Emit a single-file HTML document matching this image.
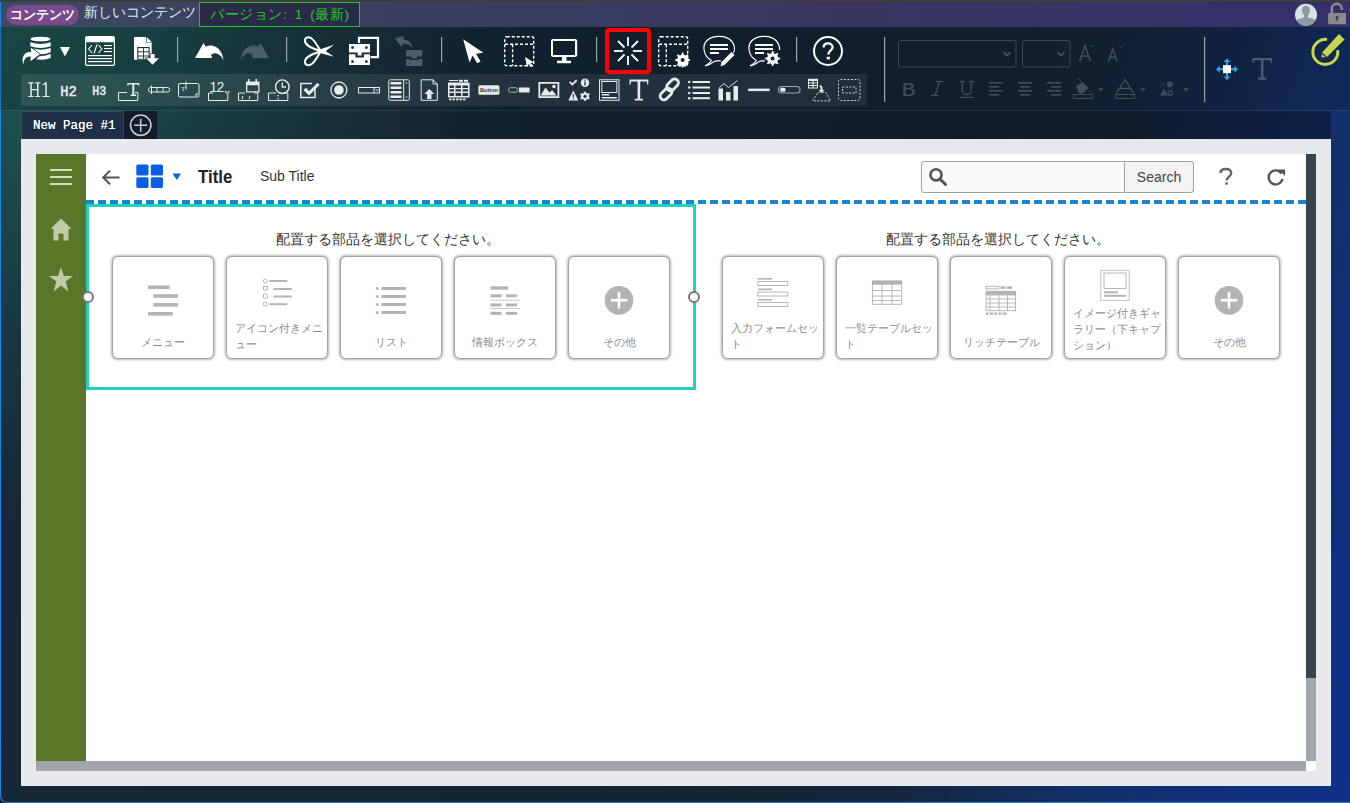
<!DOCTYPE html>
<html><head><meta charset="utf-8">
<style>
*{margin:0;padding:0;box-sizing:border-box}
html,body{width:1350px;height:803px;overflow:hidden;background:#1e1e1e}
body{position:relative;font-family:"Liberation Sans",sans-serif}
.abs{position:absolute}
#bg{position:absolute;left:0;top:0;width:1350px;height:803px;
 background:radial-gradient(ellipse 520px 520px at 0 0,rgba(30,84,80,1) 0%,rgba(30,84,80,0.8) 30%,rgba(30,84,80,0.35) 65%,rgba(30,84,80,0) 100%),linear-gradient(110deg,#16283a 0%,#152535 45%,#142433 62%,#14263e 72%,#13306a 84%,#10308a 100%);
 border-left:1px solid #1a86e6;border-bottom:1.5px solid #1a86e6;border-bottom-left-radius:7px}
#tbov{left:0;top:27px;width:1350px;height:83px;background:rgba(0,0,0,0.15)}
#tabov{left:21px;top:111px;width:1310px;height:28px;background:linear-gradient(90deg,rgba(0,0,0,0.05),rgba(0,0,0,0.15) 40%,rgba(0,0,0,0.2) 70%,rgba(0,0,0,0.32))}
#topstrip{left:0;top:0;width:1350px;height:2px;background:#3d3d3d}
#hdr{left:1px;top:2px;width:1349px;height:25px;background:linear-gradient(90deg,#3b4a60 0%,#3a3f60 30%,#38365f 60%,#33306c 100%)}
.pill{left:6px;top:5px;width:73px;height:20px;border-radius:10px;background:#7a4a8c;color:#fff;font-size:12.5px;font-weight:bold;line-height:20px;text-align:center}
.hname{left:84px;top:3px;color:#e8e8f0;font-size:13.6px;line-height:20px}
.ver{left:199px;top:2px;width:161px;height:25px;border:1px solid #1fc81f;background:#2a2a48;color:#22cc22;font-size:13.5px;line-height:23px;padding-left:10px;white-space:nowrap;letter-spacing:0.6px;word-spacing:3px}
.sep{position:absolute;width:1px;background:#8a96a0}
#row2{left:21px;top:74px;width:846px;height:32px;border-radius:3px;background:linear-gradient(90deg,rgba(255,255,255,0.09),rgba(255,255,255,0.07))}
.ic{position:absolute}
#tabline{left:1px;top:110px;width:1349px;height:1px;background:rgba(255,255,255,0.06)}
#tab1{left:21px;top:111px;width:103px;height:28px;background:#1e2f47;border:1px solid #33445a;border-bottom:none;color:#fff;font-family:"Liberation Mono",monospace;font-size:12.5px;line-height:28px;padding-left:11px;font-weight:normal;text-shadow:0 0 0.5px #fff}
#tab2{left:124px;top:111px;width:33px;height:28px;background:#131d2a}
#content{left:21px;top:139px;width:1310px;height:647px;background:#e8e9ec}
#page{left:36px;top:154px;width:1270px;height:607px;background:#fff}
#side{left:36px;top:154px;width:50px;height:607px;background:#5a7628}
#vscroll{left:1306px;top:154px;width:10px;height:607px;background:#a1a6ad}
#vthumb{left:1306px;top:154px;width:10px;height:524px;background:#35444f}
#hscroll{left:36px;top:761px;width:1270px;height:10px;background:#a1a6ad}
#corner{left:1306px;top:761px;width:10px;height:10px;background:#fff}
.dash{left:86px;top:200px;width:1220px;height:4px;background:repeating-linear-gradient(90deg,#1586d8 0 8px,transparent 8px 12px)}
#sel{left:86px;top:204px;width:610px;height:186px;border:3px solid #20d0c0}
.handle{position:absolute;width:12px;height:12px;border-radius:50%;border:2px solid #777;background:#fff}
.instr{position:absolute;top:231px;font-size:13.6px;color:#333;width:400px;text-align:center;line-height:18px}
.card{position:absolute;top:256px;width:102px;height:103px;border-radius:6px;background:#fff;border:1.5px solid #a2a2a2;box-shadow:0 0 2.5px 0.5px rgba(0,0,0,0.3)}
.card .lbl{position:absolute;left:0;right:0;color:#8c8c8c;font-size:10.6px;line-height:16px}
.title{left:198px;top:166px;font-size:19px;font-weight:bold;color:#222;transform:scaleX(0.885);transform-origin:0 0}
.subtitle{left:260px;top:168px;font-size:14px;color:#333}
#search{left:921px;top:161px;width:273px;height:32px;border:1px solid #a0a0a0;border-radius:3px;background:#fafafa}
#sbtn{left:1124px;top:161px;width:70px;height:32px;border:1px solid #a0a0a0;border-radius:0 3px 3px 0;background:#f3f3f3;color:#444;font-size:14px;line-height:30px;text-align:center}
</style></head><body>
<div id="bg"></div>
<div class="abs" id="topstrip"></div>
<div class="abs" id="tbov"></div>
<div class="abs" id="tabov"></div>
<div class="abs" id="hdr"></div>
<div class="abs pill">コンテンツ</div>
<div class="abs hname">新しいコンテンツ</div>
<div class="abs ver">バージョン: 1 (最新)</div>

<div class="abs" id="row2"></div>
<svg class="abs" style="left:0;top:0" width="1350" height="140" viewBox="0 0 1350 140">
<g fill="#fff" stroke="none">
 <!-- DB icon -->
 <ellipse cx="40.5" cy="39" rx="10" ry="2.3"/>
 <path d="M30.3 42.2 Q40.5 45.8 50.7 42.2 V46.2 Q40.5 49.8 30.3 46.2 Z"/>
 <path d="M33 48.5 Q40.5 51 50.7 48 V52.3 Q44 55 39 54 Z"/>
 <path d="M39.5 56.2 Q46 56 50.7 54 V58 Q44 60.5 36 59.2 Z"/>
 <path d="M23.5 64.8 C20.5 57 25 51 31.2 52.2 L30.8 47.5 L39.8 54.3 L30.5 61.2 L30.6 56.5 C26.5 55.8 23.5 59 23.5 64.8 Z" stroke="#1a4448" stroke-width="1.3" paint-order="stroke"/>
 <path d="M60 47 L70 47 L65 56.6 Z"/>
 <!-- html icon -->
 <path fill-rule="evenodd" d="M87 36 H113 Q115 36 115 38 V64 Q115 66 113 66 H87 Q85 66 85 64 V38 Q85 36 87 36 Z M86.2 42.2 V63.8 Q86.2 64.8 87.2 64.8 H112.8 Q113.8 64.8 113.8 63.8 V42.2 Z"/>
 <rect x="104" y="45" width="8" height="1.1"/><rect x="104" y="48" width="8" height="1.1"/><rect x="104" y="51" width="8" height="1.1"/>
 <path d="M92 45 L88.6 49 L92 53 M97 44.5 L94 53.5 M98.5 45 L101.9 49 L98.5 53" fill="none" stroke="#fff" stroke-width="1.1"/>
 <rect x="88" y="55" width="24" height="1.2"/><rect x="88" y="58" width="24" height="1.2"/><rect x="88" y="61" width="24" height="1.2"/>
 <!-- sheet icon -->
 <path d="M134 37 H146 V42.5 H151.7 V56 L148.5 56 V59.7 H134 Z"/>
 <path d="M146.7 37 L151.7 42 H146.7 Z"/>
 <rect x="137.2" y="47" width="12.5" height="12.7" fill="#18393f"/>
 <rect x="138.3" y="48.1" width="4.8" height="3.2"/><rect x="144" y="48.1" width="4.6" height="3.2"/>
 <rect x="138.3" y="52.3" width="4.8" height="3.2"/><rect x="144" y="52.3" width="4.6" height="3.2"/>
 <rect x="138.3" y="56.5" width="4.8" height="2.2"/><rect x="144" y="56.5" width="4.6" height="2.2"/>
 <path d="M150.5 54 H154.6 V58.2 H159 L152.6 64.8 L146.2 58.2 H150.5 Z" stroke="#18393f" stroke-width="1.2" paint-order="stroke"/>
 <!-- undo -->
 <path d="M195 58 L203.5 43 L205.7 46.6 C213 43.5 222 47.5 223.5 60.5 C221 54.5 215.5 51 211 55 L212.2 58 Z"/>
 <!-- scissors -->
 <g fill="none" stroke="#fff" stroke-width="2">
  <path d="M320.5 51 C314 49 306 46.5 305 41.5 C304.5 37.5 308 36.5 311 38 C314.5 40 317 45 320.5 51"/>
  <path d="M320.5 51.5 C314 53.5 306 56 305 61 C304.5 65 308 66 311 64.5 C314.5 62.5 317 57.5 320.5 51.5"/>
 </g>
 <path d="M318 50 L334 44.8 L324 52.5 Z"/>
 <path d="M318 52.5 L334 56.8 L324 50 Z"/>
 <!-- copy -->
 <path d="M357.9 43 V36.8 H379.1 V58.2 H370.5 V56 H376.9 V39 H360.1 V43 Z"/>
 <path d="M349 44 H370 V52.6 H361.7 V55.5 H357.7 V52.6 H349 Z"/>
 <path d="M349 54.3 H355.4 V57.5 H363.9 V54.3 H370 V65.1 H349 Z"/>
 <circle cx="352.6" cy="47.6" r="1.4" fill="#17283a"/><circle cx="366.4" cy="47.6" r="1.4" fill="#17283a"/>
 <circle cx="352.6" cy="61.6" r="1.4" fill="#17283a"/><circle cx="366.4" cy="61.6" r="1.4" fill="#17283a"/>
 <!-- pointer -->
 <path d="M463.2 39.2 L483.4 52.7 L476 53.8 L480.6 61.6 L477.2 63.3 L472.6 55.4 L469.5 62.6 Z"/>
 <!-- monitor -->
 <path fill-rule="evenodd" d="M553 38.9 H575 Q577.2 38.9 577.2 41 V55 Q577.2 57 575 57 H553 Q551 57 551 55 V41 Q551 38.9 553 38.9 Z M553 41 V55 H575 V41 Z"/>
 <rect x="562" y="57" width="4.5" height="4"/><rect x="557" y="60.7" width="14" height="2.5"/>
 <!-- spinner -->
 <g stroke="#fff" stroke-width="1.8" stroke-linecap="butt">
  <line x1="628" y1="37" x2="628" y2="46"/><line x1="628" y1="56" x2="628" y2="65"/>
  <line x1="614" y1="51" x2="623" y2="51"/><line x1="633" y1="51" x2="642" y2="51"/>
  <line x1="618" y1="41" x2="624.5" y2="47.5"/><line x1="631.5" y1="54.5" x2="638" y2="61"/>
  <line x1="638" y1="41" x2="631.5" y2="47.5"/><line x1="624.5" y1="54.5" x2="618" y2="61"/>
 </g>
 <!-- chats lines -->
 <rect x="710" y="44" width="18" height="2"/><rect x="710" y="48" width="18" height="2"/><rect x="710" y="52" width="9" height="2"/>
 <rect x="755" y="44" width="18" height="2"/><rect x="755" y="48" width="18" height="2"/><rect x="755" y="52" width="9" height="2"/>
 <!-- pencil on chat1 -->
 <path d="M731.5 52 L734.5 55 L724.5 65 L720.5 66.2 L721.6 62 Z"/>
 <!-- help ? -->
 <path d="M823.6 47.6 C823.6 44.9 825.5 43.4 828.1 43.4 C830.8 43.4 832.6 45.1 832.6 47.3 C832.6 50.6 828.3 50.9 828.3 54.6" fill="none" stroke="#fff" stroke-width="2.3"/><rect x="826.7" y="56.8" width="3.2" height="2.6"/>
</g>
<!-- dashed rects -->
<g fill="none" stroke="#fff" stroke-width="1.4" stroke-dasharray="3 2">
 <rect x="504.7" y="36.7" width="29" height="29" rx="2"/>
 <path d="M505 44.3 H533.5 M512.6 44.3 V65.5"/>
 <rect x="658.7" y="36.7" width="29" height="29" rx="2"/>
 <path d="M659 44.3 H687.5 M666.3 44.3 V65.5"/>
</g>
<path d="M525 57 L534 62.5 L530.5 63 L533.5 66 L532 67 L529 64 L527 67 Z" fill="#fff"/>
<!-- gears -->
<g id="gear" fill="#fff">
 <path d="M682 52.5 l1.3 0 l0.6 2.2 l1.6 0.7 l2 -1.1 l0.9 0.9 l-1.1 2 l0.7 1.6 l2.2 0.6 l0 1.3 l-2.2 0.6 l-0.7 1.6 l1.1 2 l-0.9 0.9 l-2 -1.1 l-1.6 0.7 l-0.6 2.2 l-1.3 0 l-0.6 -2.2 l-1.6 -0.7 l-2 1.1 l-0.9 -0.9 l1.1 -2 l-0.7 -1.6 l-2.2 -0.6 l0 -1.3 l2.2 -0.6 l0.7 -1.6 l-1.1 -2 l0.9 -0.9 l2 1.1 l1.6 -0.7 Z"/>
</g>
<circle cx="682.6" cy="60.1" r="2" fill="#14222f"/>
<g transform="translate(90,-1.5)"><use href="#gear"/></g>
<circle cx="772.6" cy="58.6" r="2" fill="#14222f"/>
<!-- chat bubbles outlines -->
<g fill="none" stroke="#fff" stroke-width="1.2">
 <path d="M711.5 60.5 C703 56 702 45 707 40.5 C713 35 726 35 731.5 41 C735 45 735 50 733.5 53 M721 61 C718 61 716 60.5 714 61.5 C712 63 709 65.5 705 66 C708.5 64 710.5 62 711.5 60.5"/>
 <path d="M756.5 60.5 C748 56 747 45 752 40.5 C758 35 771 35 776.5 41 C779 44 780 47 779.5 50 M765 61 C763 61 761 60.5 759 61.5 C757 63 754 65.5 750 66 C753.5 64 755.5 62 756.5 60.5"/>
 <circle cx="828" cy="51" r="14" stroke-width="2"/>
</g>
<!-- separators -->
<g fill="#98a4ac">
 <rect x="177" y="37" width="1.2" height="25"/>
 <rect x="286" y="37" width="1.2" height="25"/>
 <rect x="441" y="37" width="1.2" height="25"/>
 <rect x="596" y="37" width="1.2" height="25"/>
 <rect x="796" y="37" width="1.2" height="25"/>
 <rect x="884" y="37" width="1.2" height="65"/>
 <rect x="1204" y="37" width="1.2" height="65"/>
</g>
<!-- dim redo / paste -->
<g fill="#4a6068">
 <path d="M269 58 L260.5 43 L258.3 46.6 C251 43.5 242 47.5 240.5 60.5 C243 54.5 248.5 51 253 55 L251.8 58 Z"/>
 <path d="M395 38.5 L404 36 L403 39.5 C409 40 412 43 412.5 48 C410 44.5 406 43.5 402.5 43.8 L401.5 47 Z"/>
 <path fill-rule="evenodd" d="M406 50 H422.3 V56.5 H417 V58.5 H411.3 V56.5 H406 Z M406 59 H409.5 V60 H418.8 V59 H422.3 V66 H406 Z"/>
</g>
<!-- red box -->
<rect x="607" y="30" width="42" height="42" rx="2" fill="none" stroke="#ff0000" stroke-width="4"/>
</svg>

<svg class="abs" style="left:0;top:70px" width="880" height="40" viewBox="0 70 880 40">
<g fill="#e6ecec">
 <path d="M28.3 82.3 H33.6 V83.4 H31.8 V89 H37 V83.4 H35.2 V82.3 H40.3 V83.4 H38.5 V95.9 H40.3 V97 H35.2 V95.9 H37 V90.3 H31.8 V95.9 H33.6 V97 H28.3 V95.9 H30.3 V83.4 H28.3 Z"/>
 <path d="M45.3 82.3 H46.8 V95.9 H49.6 V97 H42.5 V95.9 H45.3 V84.3 L42.6 85.6 V84.4 Z"/>
 <text x="60.2" y="96.3" font-family="Liberation Mono" font-size="15.5" textLength="16.5" lengthAdjust="spacingAndGlyphs" stroke="#e6ecec" stroke-width="0.6">H2</text>
 <text x="92.3" y="95.3" font-family="Liberation Mono" font-size="13.5" textLength="14" lengthAdjust="spacingAndGlyphs" stroke="#e6ecec" stroke-width="0.6">H3</text>
</g>
<g fill="none" stroke="#e6ecec" stroke-width="1">
 <!-- text input -->
 <path d="M127 92.5 H118.5 V100.5 H137.8 V92.5 H135"/>
 <!-- small input -->
 <rect x="148.5" y="87.5" width="21" height="4.5" rx="2"/>
 <path d="M157 87.5 V92 M163 87.5 V92"/>
 <!-- textarea -->
 <rect x="178.5" y="83.5" width="20.5" height="13.5" rx="1.5"/>
 <!-- number -->
 <path d="M213 93 H208.5 V100.5 H227.8 V93 H226"/>
 <!-- calendar box -->
 <path d="M245 93 H238.5 V100.5 H257.8 V93 H254"/>
 <path d="M242 99 L243 96 M249 99 L250 96"/>
 <!-- clock box -->
 <path d="M276 93 H268.5 V100.5 H287.8 V93 H284"/>
 <circle cx="282.3" cy="86.7" r="6.8" stroke-width="1.4"/>
 <path d="M282.3 82.5 V87 H286" stroke-width="1.3"/>
 <!-- checkbox -->
 <path d="M315 87 V97.5 H300.8 V83.5 H312" stroke-width="1.5"/>
 <!-- radio -->
 <circle cx="338.9" cy="90" r="8" stroke-width="1.3"/>
 <!-- select -->
 <rect x="358.5" y="87.5" width="21" height="5.5"/>
 <path d="M374 87.5 V93"/>
 <!-- listbox -->
 <rect x="388.8" y="79.8" width="20.5" height="20.5" rx="1.5"/>
 <path d="M403.7 80 V100"/>
 <!-- file -->
 <path d="M433 79.8 H421.2 V100.3 H437.3 V84 Z M433 79.8 V84 H437.3"/>
 <!-- frame -->
 <rect x="599.5" y="79.8" width="19.5" height="20.5"/>
 <rect x="601.8" y="81.5" width="15" height="11"/>
 <!-- toggle -->
 <rect x="778.5" y="86.5" width="21.5" height="6.5" rx="3.25" stroke="#9aa4ac" stroke-width="1.2"/>
 <!-- slider left -->
 <rect x="508.5" y="87.7" width="9" height="4.5" rx="2" stroke="#aab4b8"/>
</g>
<g fill="#e6ecec">
 <!-- T on input -->
 <path d="M127.3 83 H139.3 V85.8 H138.2 V84.5 H134.3 V94.5 H136 V96 H130.6 V94.5 H132.3 V84.5 H128.4 V85.8 H127.3 Z"/>
 <!-- small input handle -->
 <rect x="151" y="85.5" width="1" height="8.5"/>
 <!-- textarea T -->
 <text x="181" y="90.5" font-family="Liberation Serif" font-size="7">T</text>
 <rect x="185.5" y="81.5" width="1" height="8"/>
 <path d="M197.5 95.5 L197.5 92.5 L194.5 95.5 Z"/>
 <!-- 12.. -->
 <text x="209.5" y="92.3" font-family="Liberation Sans" font-size="14" letter-spacing="-0.8">12</text>
 <rect x="225" y="91" width="1.5" height="1.5"/><rect x="228" y="91" width="1.5" height="1.5"/>
 <!-- calendar -->
 <path fill-rule="evenodd" d="M246 81.5 H259.5 V92.5 H246 Z M247.3 85.2 V91.2 H258.2 V85.2 Z"/>
 <rect x="248" y="79" width="1.5" height="3.5"/><rect x="255.5" y="79" width="1.5" height="3.5"/>
 <!-- clock dots -->
 <rect x="277.5" y="95" width="1.3" height="1.3"/><rect x="277.5" y="98" width="1.3" height="1.3"/>
 <!-- check mark -->
 <path d="M303.5 90 L306 87.7 L309 91.2 L317.5 82.8 L319.5 85 L309 95.5 Z"/>
 <!-- radio dot -->
 <circle cx="338.9" cy="90" r="4.8"/>
 <!-- select caret -->
 <path d="M375.5 89 L377 91 L378.5 89" fill="none" stroke="#e6ecec" stroke-width="0.8"/>
 <!-- listbox bars -->
 <rect x="390.5" y="82" width="11" height="2.5"/><rect x="390.5" y="86.5" width="11" height="2.5"/>
 <rect x="390.5" y="91" width="11" height="2.5"/><rect x="390.5" y="95.5" width="11" height="2.5"/>
 <path d="M405.5 83.5 L406.5 82 L407.5 83.5 Z M405.5 96.5 L406.5 98 L407.5 96.5 Z"/>
 <!-- upload arrow -->
 <path d="M429.3 89 L434.3 94 H431.5 V99 H427.1 V94 H424.3 Z"/>
 <!-- table -->
 <path fill-rule="evenodd" d="M448 82.5 H469.6 V97.5 H448 Z M449.5 85.5 V88 H454 V85.5 Z M455.5 85.5 V88 H461 V85.5 Z M462.5 85.5 V88 H468 V85.5 Z M449.5 89.3 V91.6 H454 V89.3 Z M455.5 89.3 V91.6 H461 V89.3 Z M462.5 89.3 V91.6 H468 V89.3 Z M449.5 93 V96 H454 V93 Z M455.5 93 V96 H461 V93 Z M462.5 93 V96 H468 V93 Z"/>
 <rect x="449" y="80" width="9" height="1"/><rect x="459" y="79.8" width="4" height="2"/><rect x="464" y="79.8" width="4" height="2"/>
 <rect x="449" y="98.5" width="2.5" height="1.8"/><rect x="452.5" y="98.5" width="2.5" height="1.8"/><rect x="456" y="98.5" width="2.5" height="1.8"/><rect x="459.5" y="98.5" width="2.5" height="1.8"/><rect x="463" y="98.5" width="2.5" height="1.8"/>
 <!-- button -->
 <rect x="478.4" y="85.3" width="21" height="9.4" rx="1.5"/>
 <text x="489" y="92.3" font-family="Liberation Sans" font-size="5.6" text-anchor="middle" fill="#2a3a48" font-weight="bold">Button</text>
 <!-- slider right -->
 <rect x="519" y="87.5" width="10.6" height="5"/>
 <!-- image -->
 <path fill-rule="evenodd" d="M538.4 82 H559.3 V98 H538.4 Z M540.2 83.8 V96.2 H557.5 V83.8 Z"/>
 <path d="M540.5 95.5 L545.5 87.5 L549.5 92.5 L552 90 L556.5 95.5 Z"/>
 <circle cx="554" cy="86.5" r="1.8"/>
 <!-- icons group -->
 <path d="M569 82.5 L570.3 81.2 L572.3 83.2 L576 79.6 L577.3 80.9 L572.3 85.8 Z"/>
 <circle cx="585" cy="82.8" r="4.2"/>
 <rect x="584.3" y="81.5" width="1.4" height="4" fill="#2a3848"/><rect x="584.3" y="79.6" width="1.4" height="1.2" fill="#2a3848"/>
 <path d="M573.3 90.5 L578.3 100.6 H568.3 Z"/>
 <rect x="572.7" y="94" width="1.2" height="3.5" fill="#2a3848"/><rect x="572.7" y="98.3" width="1.2" height="1.1" fill="#2a3848"/>
 <g transform="translate(585 96.3)"><path d="M-1 -4.5 H1 L1.4 -3.2 L2.6 -2.6 L3.8 -3.3 L4.9 -1.9 L4 -1 V1 L4.9 1.9 L3.8 3.3 L2.6 2.6 L1.4 3.2 L1 4.5 H-1 L-1.4 3.2 L-2.6 2.6 L-3.8 3.3 L-4.9 1.9 L-4 1 V-1 L-4.9 -1.9 L-3.8 -3.3 L-2.6 -2.6 L-1.4 -3.2 Z"/><circle r="1.6" fill="#2a3848"/></g>
 <!-- frame bars -->
 <rect x="601.8" y="94" width="7.5" height="1.5"/><rect x="601.8" y="97" width="15" height="1.5"/>
 <!-- T big -->
 <path d="M629.5 79.5 H648.3 V84.5 H647 V81.5 H640.2 V98.8 H643 V100.5 H634.8 V98.8 H637.6 V81.5 H630.8 V84.5 H629.5 Z"/>
 <!-- list -->
 <circle cx="689.2" cy="82" r="1.2"/><circle cx="689.2" cy="87.5" r="1.2"/><circle cx="689.2" cy="93" r="1.2"/><circle cx="689.2" cy="98.2" r="1.2"/>
 <rect x="692.5" y="81" width="17.5" height="2"/><rect x="692.5" y="86.5" width="17.5" height="2"/><rect x="692.5" y="92" width="17.5" height="2"/><rect x="692.5" y="97.2" width="17.5" height="2"/>
 <!-- chart -->
 <rect x="718.5" y="88.5" width="4.5" height="12"/><rect x="726" y="92" width="4.5" height="8.5"/><rect x="733.5" y="86" width="4.5" height="14.5"/>
 <!-- line -->
 <rect x="748.2" y="88.6" width="21.5" height="2.5"/>
 <!-- toggle knob -->
 <rect x="780.3" y="87.8" width="5.2" height="4" rx="1.5"/>
 <!-- import table -->
 <path fill-rule="evenodd" d="M808 78.8 H818 V88.5 H808 Z M809 81 V82.5 H812.5 V81 Z M813.5 81 V82.5 H817 V81 Z M809 83.5 V85 H812.5 V83.5 Z M813.5 83.5 V85 H817 V83.5 Z M809 86 V87.5 H812.5 V86 Z M813.5 86 V87.5 H817 V86 Z"/>
 <path d="M819.5 85 C822 85.5 823 87 822.5 90 L824.5 89.5 L821.5 93 L818.5 89.8 L820.5 90 C821 88 820.5 86.5 819.5 86.5 Z"/>
</g>
<g fill="none" stroke="#e6ecec" stroke-width="1.4">
 <path d="M719 88.2 L724 83.5 L728.5 87.5 L737.5 80.5" stroke-width="0.9"/>
 <g transform="rotate(-45 669.2 89.5)" stroke-width="2.8"><rect x="657" y="86.6" width="13.6" height="7.6" rx="3.8"/><rect x="668" y="84.8" width="13.6" height="7.6" rx="3.8" stroke="#2a3746" stroke-width="4.6" fill="none" stroke-dasharray="0 3.5 10 100"/><rect x="668" y="84.8" width="13.6" height="7.6" rx="3.8"/></g>
</g>
<g fill="none" stroke="#c8d0d4" stroke-width="1" stroke-dasharray="2 1.5">
 <path d="M812.5 100.8 L818 92.5 C820 92 824 92 826 92.5 L830.5 100.8 Z"/>
 <rect x="838.5" y="79.5" width="21.5" height="21" rx="2"/>
 <rect x="842.5" y="87" width="13.5" height="6"/>
</g>
</svg>

<svg class="abs" style="left:880px;top:0" width="470" height="110" viewBox="880 0 470 110">
<!-- avatar -->
<circle cx="1306" cy="14.8" r="11" fill="#d9e1e8"/>
<clipPath id="avc"><circle cx="1306" cy="14.8" r="11"/></clipPath><g clip-path="url(#avc)" fill="#8c9aa2"><path d="M1302 10 C1302 7.2 1303.8 5.8 1306 5.8 C1308.2 5.8 1310 7.2 1310 10 C1310 12.5 1309 14.2 1308 15.2 L1308 17.5 C1312 18.3 1316 19.5 1318 22 V27 H1294 V22 C1296 19.5 1300 18.3 1304 17.5 L1304 15.2 C1303 14.2 1302 12.5 1302 10 Z"/></g>
<!-- lock -->
<rect x="1328.1" y="13" width="17.9" height="11.2" rx="1" fill="#8a8a8a"/>
<path d="M1331.8 13.5 V8.5 C1331.8 5.5 1334 3.8 1336.8 3.8 C1339.6 3.8 1341.8 5.5 1341.8 8.5 V10" fill="none" stroke="#8a8a8a" stroke-width="2.4"/>
<circle cx="1337" cy="17.5" r="1.4" fill="#36306a"/><rect x="1336.3" y="17.5" width="1.4" height="3.5" fill="#36306a"/>
<!-- selects -->
<rect x="898.5" y="40.5" width="117.5" height="26.5" rx="2" fill="none" stroke="#3c4b58" stroke-width="1"/>
<rect x="1022.5" y="40.5" width="47.5" height="26.5" rx="2" fill="none" stroke="#3c4b58" stroke-width="1"/>
<g fill="none" stroke="#4a5864" stroke-width="1.6">
 <path d="M1003.5 52 L1007 55.5 L1010.5 52"/>
 <path d="M1057.5 52 L1061 55.5 L1064.5 52"/>
</g>
<g fill="none" stroke="#44525e" stroke-width="1.3">
 <path d="M1079.5 61.5 L1085 45.5 L1090.5 61.5 M1081.5 56 H1088.5"/>
 <path d="M1108.5 61.5 L1112.8 49 L1117 61.5 M1110 57 H1115.5"/>
</g>
<g fill="none" stroke="#2a5a78" stroke-width="0.9">
 <path d="M1090.5 47 L1092.5 45 L1094.5 47"/>
 <path d="M1119 45.5 L1121 47.5 L1123 45.5"/>
</g>
<!-- B I U -->
<g fill="#3f4e5a">
 <text x="901.5" y="96" font-family="Liberation Mono" font-size="20" textLength="14" lengthAdjust="spacingAndGlyphs">B</text>
 <path d="M935.5 81.5 H943.5 M931 95.5 H939 M939.5 81.5 L935 95.5" fill="none" stroke="#3f4e5a" stroke-width="1.2"/>
 <path d="M959.5 81.5 H965 M962.3 81.5 V90 C962.3 93 964 94.5 966.8 94.5 C969.6 94.5 971.3 93 971.3 90 V81.5 M968.8 81.5 H974" fill="none" stroke="#3f4e5a" stroke-width="1.3"/>
 <rect x="960" y="96.8" width="14" height="1.2"/>
 <rect x="989" y="82" width="14" height="1.6"/><rect x="989" y="86" width="10" height="1.6"/><rect x="989" y="90" width="14" height="1.6"/><rect x="989" y="94" width="10" height="1.6"/>
 <rect x="1018" y="82" width="14" height="1.6"/><rect x="1020" y="86" width="10" height="1.6"/><rect x="1018" y="90" width="14" height="1.6"/><rect x="1020" y="94" width="10" height="1.6"/>
 <rect x="1047" y="82" width="14" height="1.6"/><rect x="1051" y="86" width="10" height="1.6"/><rect x="1047" y="90" width="14" height="1.6"/><rect x="1051" y="94" width="10" height="1.6"/>
 <!-- bucket -->
 <path d="M1076 86.5 L1082.5 82 L1088.5 88 L1084 92.5 C1082.5 94 1080 94 1078.5 92.5 Z"/>
 <path d="M1078.5 78.5 L1083.5 84.5" fill="none" stroke="#3f4e5a" stroke-width="1"/>
 <rect x="1089.5" y="90.5" width="1.2" height="2"/>
 <rect x="1073.5" y="94.5" width="19" height="4" fill="none" stroke="#3f4e5a" stroke-width="1"/>
 <path d="M1097.8 88.3 L1103.8 88.3 L1100.8 91.3 Z"/>
 <path d="M1139.8 88.3 L1145.8 88.3 L1142.8 91.3 Z"/>
 <path d="M1183 88.3 L1189 88.3 L1186 91.3 Z"/>
 <rect x="1115.5" y="94.5" width="19" height="4" fill="none" stroke="#3f4e5a" stroke-width="1"/>
 <!-- shapes -->
 <circle cx="1169.8" cy="84.5" r="3"/>
 <path d="M1164 88.5 L1167.8 95.5 H1160.2 Z"/>
 <circle cx="1170" cy="93" r="2.2" fill="none" stroke="#3f4e5a" stroke-width="1.3"/>
 <path d="M1160.5 84 L1162 85.5 L1165 82.5" fill="none" stroke="#3f4e5a" stroke-width="1"/>
</g>
<path d="M1116.5 93 L1125 79.5 L1133.5 93 M1119.5 88.5 H1130.5" fill="none" stroke="#3f4e5a" stroke-width="1.4"/>
<!-- move icon -->
<g fill="#2aa6e0">
 <path d="M1227 58.4 L1230.5 62 H1228 V66 H1226 V62 H1223.5 Z"/>
 <path d="M1227 80 L1230.5 76.4 H1228 V72.4 H1226 V76.4 H1223.5 Z"/>
 <path d="M1216 69.2 L1219.6 65.7 V68.2 H1223.6 V70.2 H1219.6 V72.7 Z"/>
 <path d="M1238 69.2 L1234.4 65.7 V68.2 H1230.4 V70.2 H1234.4 V72.7 Z"/>
</g>
<rect x="1223" y="65.2" width="8" height="8" fill="#fff"/>
<!-- T gray -->
<path d="M1252.4 58 H1272 V63 H1270.5 V60.2 H1263.5 V77.6 H1266.3 V79.7 H1258.1 V77.6 H1260.9 V60.2 H1253.9 V63 H1252.4 Z" fill="#4b5a70"/>
<!-- yellow edit -->
<path d="M1327 39.5 A12.5 12.5 0 1 0 1337.7 50.2" fill="none" stroke="#cad64c" stroke-width="3"/>
<path d="M1339 34 L1344.5 39.5 L1327 57 L1320.8 58.5 L1322.3 52.2 Z" fill="#cad64c" stroke="#13284f" stroke-width="1.2" paint-order="stroke"/>
<path d="M1322.3 52.2 L1320.8 58.5 L1327 57 Z" fill="#13284f"/>
<path d="M1322.3 54 L1321.6 57.5 L1325.2 56.8 Z" fill="#cad64c"/>
</svg>

<div class="abs" id="tabline"></div>
<div class="abs" id="tab1">New Page #1</div>
<div class="abs" id="tab2"></div>
<div class="abs" id="content"></div>
<div class="abs" id="page"></div>
<div class="abs" id="side"></div>
<div class="abs" id="vscroll"></div>
<div class="abs" id="vthumb"></div>
<div class="abs" id="hscroll"></div>
<div class="abs" id="corner"></div>
<div class="abs dash"></div>
<div class="abs" id="sel"></div>
<div class="abs title">Title</div>
<div class="abs subtitle">Sub Title</div>
<div class="abs" id="search"></div>
<div class="abs" id="sbtn">Search</div>

<svg class="abs" style="left:123px;top:111px" width="34" height="28" viewBox="123 111 34 28">
 <circle cx="140.7" cy="125.2" r="10.2" fill="none" stroke="#c8ccd0" stroke-width="1.6"/>
 <path d="M134.2 125.2 H147.2 M140.7 118.7 V131.7" stroke="#c8ccd0" stroke-width="1.6"/>
</svg>
<svg class="abs" style="left:36px;top:154px" width="60" height="150" viewBox="36 154 60 150">
 <g fill="#d6dbc4"><rect x="50" y="169" width="22" height="2"/><rect x="50" y="176" width="22" height="2"/><rect x="50" y="183" width="22" height="2"/></g>
 <path d="M61 218.5 L71.5 229 H68.5 V240.4 H63.5 V233.5 H58.5 V240.4 H53.5 V229 H50.5 Z" fill="#c0cba8"/>
 <path d="M61 267 L63.9 276 L73 276.1 L65.7 281.6 L68.4 291.4 L61 285.6 L53.6 291.4 L56.3 281.6 L49 276.1 L58.1 276 Z" fill="#c0cba8"/>
</svg>
<svg class="abs" style="left:96px;top:160px" width="200" height="34" viewBox="96 160 200 34">
 <path d="M103 177.5 H119.5 M110 170.8 L103.2 177.5 L110 184.3" fill="none" stroke="#555" stroke-width="2"/>
 <g fill="#0a5fe0">
  <rect x="136.3" y="164.5" width="12.2" height="11" rx="1.5"/>
  <rect x="150.8" y="164.5" width="12.2" height="11" rx="1.5"/>
  <rect x="136.3" y="177.3" width="12.2" height="10.8" rx="1.5"/>
  <rect x="150.8" y="177.3" width="12.2" height="10.8" rx="1.5"/>
  <path d="M172.5 173.5 H181 L176.8 180 Z"/>
 </g>
</svg>
<svg class="abs" style="left:921px;top:161px" width="380" height="34" viewBox="921 161 380 34">
 <circle cx="936" cy="174.8" r="5.6" fill="none" stroke="#555" stroke-width="2.6"/>
 <path d="M940 179 L945.5 184.5" stroke="#555" stroke-width="3" stroke-linecap="round"/>
 <path d="M1220.5 173 C1220.5 170.5 1222.8 169 1225.8 169 C1229 169 1231.2 170.7 1231.2 173.3 C1231.2 176.5 1226.6 177 1226.6 180.5" fill="none" stroke="#666" stroke-width="2.4"/>
 <rect x="1225.2" y="182.3" width="2.6" height="2.4" fill="#666"/>
 <path d="M1281.5 173.5 A7 7 0 1 0 1282.5 179" fill="none" stroke="#555" stroke-width="2.4"/>
 <path d="M1278.5 169.5 L1285 169.5 L1285 176 Z" fill="#555"/>
</svg>

<div class="instr" style="left:188px">配置する部品を選択してください。</div>
<div class="instr" style="left:798px">配置する部品を選択してください。</div>
<div class="handle" style="left:82px;top:291px"></div>
<div class="handle" style="left:688px;top:291px"></div>
<div class="card" style="left:112px"><div class="lbl" style="top:77px;text-align:center">メニュー</div></div>
<div class="card" style="left:226px"><div class="lbl" style="top:63px;padding-left:8px">アイコン付きメニュー</div></div>
<div class="card" style="left:340px"><div class="lbl" style="top:77px;text-align:center">リスト</div></div>
<div class="card" style="left:454px"><div class="lbl" style="top:77px;text-align:center">情報ボックス</div></div>
<div class="card" style="left:568px"><div class="lbl" style="top:77px;text-align:center">その他</div></div>
<div class="card" style="left:722px"><div class="lbl" style="top:63px;padding-left:8px">入力フォームセット</div></div>
<div class="card" style="left:836px"><div class="lbl" style="top:63px;padding-left:8px">一覧テーブルセット</div></div>
<div class="card" style="left:950px"><div class="lbl" style="top:77px;text-align:center">リッチテーブル</div></div>
<div class="card" style="left:1064px"><div class="lbl" style="top:48px;padding-left:8px;padding-right:4px">イメージ付きギャラリー（下キャプション）</div></div>
<div class="card" style="left:1178px"><div class="lbl" style="top:77px;text-align:center">その他</div></div>
<svg class="abs" style="left:100px;top:260px" width="1200" height="70" viewBox="100 260 1200 70">
<g fill="#b4b4b4">
 <!-- menu -->
 <rect x="148" y="285.5" width="21.5" height="3.6"/><rect x="153.3" y="294.2" width="24.7" height="3.6"/>
 <rect x="153.3" y="303" width="24.7" height="3.6"/><rect x="148" y="312" width="24.8" height="3.6"/>
 <!-- icon menu -->
 <rect x="269.4" y="280" width="17.9" height="2"/><rect x="273.4" y="288" width="18.2" height="2"/>
 <rect x="273.4" y="295.5" width="18.2" height="2"/><rect x="269.4" y="303.2" width="17.9" height="2"/>
 <!-- list -->
 <circle cx="377.3" cy="288.4" r="1.5"/><circle cx="377.3" cy="296.4" r="1.5"/><circle cx="377.3" cy="304.4" r="1.5"/><circle cx="377.3" cy="312.4" r="1.5"/>
 <rect x="381.4" y="287" width="24.6" height="3"/><rect x="381.4" y="295" width="24.6" height="3"/><rect x="381.4" y="303" width="24.6" height="3"/><rect x="381.4" y="311" width="24.6" height="3"/>
 <!-- info box -->
 <rect x="490.6" y="286.3" width="17.6" height="3.4"/>
 <rect x="490.6" y="294.3" width="11" height="3"/><rect x="506" y="294.3" width="11" height="3"/>
 <rect x="490" y="299.8" width="30" height="0.7"/>
 <rect x="490.6" y="303.4" width="11" height="3"/><rect x="506" y="303.4" width="11" height="3"/>
 <rect x="490" y="308.3" width="30" height="0.7"/>
 <rect x="490.6" y="311.9" width="11" height="3"/><rect x="506" y="311.9" width="11" height="3"/>
 <!-- plus circles -->
 <circle cx="619" cy="300.3" r="14.4"/>
 <circle cx="1229" cy="300.3" r="14.4"/>
 <!-- table set header -->
 <rect x="872" y="280.7" width="30" height="4"/>
 <!-- rich table -->
 <rect x="1000.5" y="286.3" width="5" height="2.6"/><rect x="1007" y="286.3" width="5" height="2.6"/>
 <rect x="985.8" y="291" width="30.2" height="3.8"/>
 <rect x="985.8" y="312.5" width="3" height="2.3"/><rect x="990" y="312.5" width="3" height="2.3"/><rect x="994.2" y="312.5" width="3" height="2.3"/><rect x="998.4" y="312.5" width="3" height="2.3"/><rect x="1002.6" y="312.5" width="4" height="2.3"/>
 <!-- input form labels -->
 <rect x="757.8" y="278" width="14.2" height="1.6"/><rect x="757.8" y="288.5" width="14.2" height="1.6"/><rect x="757.8" y="299" width="14.2" height="1.6"/>
 <!-- gallery bars -->
 <rect x="1104" y="291.3" width="14" height="2"/><rect x="1104" y="294.8" width="22" height="2"/>
</g>
<g fill="#fff">
 <rect x="611" y="299" width="16.3" height="2.6"/><rect x="617.7" y="292.2" width="2.6" height="16.3"/>
 <rect x="1221" y="299" width="16.3" height="2.6"/><rect x="1227.7" y="292.2" width="2.6" height="16.3"/>
</g>
<g fill="none" stroke="#b0b0b0" stroke-width="0.9">
 <!-- small icons in icon menu -->
 <circle cx="265.2" cy="281" r="2"/><rect x="263.5" y="286.5" width="4" height="3.5"/><path d="M263.5 294 H266 L267.5 295.5 V298 H263.5 Z"/><circle cx="265.2" cy="304.2" r="2"/>
 <!-- input form boxes -->
 <rect x="757.8" y="281.5" width="30" height="4"/><rect x="757.8" y="292" width="30" height="4"/><rect x="757.8" y="302.5" width="30" height="4"/>
 <!-- table set -->
 <rect x="872.4" y="281" width="29.3" height="23.3"/>
 <path d="M872.4 290.5 H901.7 M872.4 296 H901.7 M872.4 300.5 H901.7 M882 284.5 V304.3 M892 284.5 V304.3"/>
 <!-- rich table -->
 <rect x="985.8" y="286.3" width="13" height="2.6"/>
 <rect x="986.2" y="291.3" width="29.4" height="19.4"/>
 <path d="M986.2 299 H1015.6 M986.2 303 H1015.6 M986.2 307 H1015.6 M986.2 295 H1015.6 M990 294.8 V310.7 M999 294.8 V310.7 M1007.5 294.8 V310.7"/>
 <!-- gallery -->
 <rect x="1100.8" y="270.3" width="28.4" height="30" stroke="#bdbdbd"/>
 <rect x="1104" y="273" width="22" height="15.5"/>
</g>
</svg>

</body></html>
